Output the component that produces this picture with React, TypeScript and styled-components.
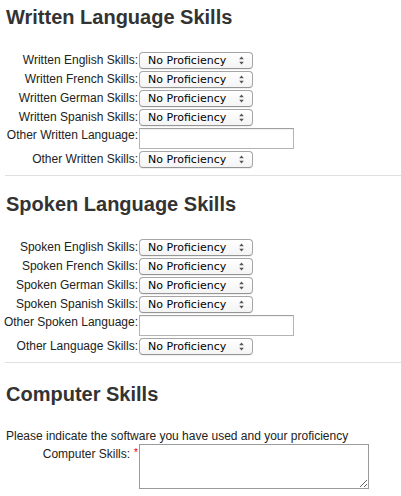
import React from "react";
import styled, { createGlobalStyle } from "styled-components";

const Global = createGlobalStyle`
  html, body { margin: 0; padding: 0; background: #fff; }
  body { font-family: "Liberation Sans", Arial, sans-serif; color: #333; }
  * { box-sizing: border-box; }
`;

const Page = styled.div`
  padding: 6px 0 0 5px;
  width: 401px;
`;

const Section = styled.section<{ $top: number; $divider?: boolean }>`
  padding-top: ${(p) => p.$top}px;
  padding-bottom: ${(p) => (p.$divider ? 7 : 0)}px;
  border-bottom: ${(p) => (p.$divider ? "1px solid #e0e0e0" : "none")};
`;

const Heading = styled.h2`
  margin: 0 0 24px 1px;
  font: 700 20px/22px "Liberation Sans", Arial, sans-serif;
  color: #333;
`;

const Form = styled.div`
  display: grid;
  grid-template-columns: 134px auto;
  row-gap: 2px;
  align-items: start;
  justify-items: start;
`;

const Label = styled.label<{ $lh?: number }>`
  justify-self: end;
  text-align: right;
  white-space: nowrap;
  font: 400 12px/${(p) => p.$lh ?? 17}px "Liberation Sans", Arial, sans-serif;
  color: #222;
  padding-right: 1px;
`;

const SelectWrap = styled.div`
  position: relative;
  width: 114px;
  height: 17px;
`;

const Select = styled.select`
  appearance: none;
  -webkit-appearance: none;
  display: block;
  width: 114px;
  height: 17px;
  margin: 0;
  padding: 0 14px 0 8px;
  border: 1px solid #a6a6a6;
  border-bottom-color: #959595;
  border-radius: 4px;
  background: linear-gradient(#ffffff, #f4f4f4);
  box-shadow: 0 1px 0 rgba(0, 0, 0, 0.06);
  font: 400 11px/15px "DejaVu Sans", "Liberation Sans", sans-serif;
  color: #000;
  outline: none;
`;

const Arrows = styled.svg`
  position: absolute;
  right: 9px;
  top: 4px;
  pointer-events: none;
`;

const TextInput = styled.input`
  display: block;
  width: 155px;
  height: 21px;
  margin: 0;
  padding: 2px 4px;
  border: 1px solid #b4b4b4;
  border-top-color: #a0a0a0;
  box-shadow: inset 0 1px 1px rgba(0, 0, 0, 0.06);
  background: #fff;
  font: 400 12px "Liberation Sans", Arial, sans-serif;
  outline: none;
`;

const Intro = styled.p`
  margin: 0 0 1px 1px;
  font: 400 12px/14px "Liberation Sans", Arial, sans-serif;
  color: #222;
`;

const Required = styled.span`
  color: #d00;
  font-size: 10px;
  vertical-align: 2px;
  margin-left: 4px;
`;

const TextArea = styled.textarea`
  display: block;
  width: 230px;
  height: 45px;
  margin: 0;
  padding: 2px 4px;
  border: 1px solid #9a9a9a;
  background: #fff;
  font: 400 12px "Liberation Sans", Arial, sans-serif;
  outline: none;
`;

const options = [
  "No Proficiency",
  "Basic",
  "Intermediate",
  "Advanced",
  "Fluent",
];

function ProficiencySelect({ id }: { id: string }) {
  return (
    <SelectWrap>
      <Select id={id} defaultValue="No Proficiency">
        {options.map((o) => (
          <option key={o}>{o}</option>
        ))}
      </Select>
      <Arrows width="5" height="9" viewBox="0 0 5 9">
        <path d="M2.5 0.5 L4.8 3.3 L0.2 3.3 Z" fill="#555" />
        <path d="M2.5 8.5 L4.8 5.7 L0.2 5.7 Z" fill="#555" />
      </Arrows>
    </SelectWrap>
  );
}

type Row = { label: string; kind: "select" | "text" };

const written: Row[] = [
  { label: "Written English Skills:", kind: "select" },
  { label: "Written French Skills:", kind: "select" },
  { label: "Written German Skills:", kind: "select" },
  { label: "Written Spanish Skills:", kind: "select" },
  { label: "Other Written Language:", kind: "text" },
  { label: "Other Written Skills:", kind: "select" },
];

const spoken: Row[] = [
  { label: "Spoken English Skills:", kind: "select" },
  { label: "Spoken French Skills:", kind: "select" },
  { label: "Spoken German Skills:", kind: "select" },
  { label: "Spoken Spanish Skills:", kind: "select" },
  { label: "Other Spoken Language:", kind: "text" },
  { label: "Other Language Skills:", kind: "select" },
];

function Rows({ rows, prefix }: { rows: Row[]; prefix: string }) {
  return (
    <Form>
      {rows.map((r, i) => {
        const id = `${prefix}-${i}`;
        return (
          <React.Fragment key={id}>
            <Label htmlFor={id} $lh={r.kind === "text" ? 15 : 17}>
              {r.label}
            </Label>
            {r.kind === "select" ? (
              <ProficiencySelect id={id} />
            ) : (
              <TextInput id={id} type="text" />
            )}
          </React.Fragment>
        );
      })}
    </Form>
  );
}

export default function App() {
  return (
    <>
      <Global />
      <Page>
        <Section $top={0} $divider>
          <Heading>Written Language Skills</Heading>
          <Rows rows={written} prefix="w" />
        </Section>
        <Section $top={17} $divider>
          <Heading>Spoken Language Skills</Heading>
          <Rows rows={spoken} prefix="s" />
        </Section>
        <Section $top={20}>
          <Heading>Computer Skills</Heading>
          <Intro>Please indicate the software you have used and your proficiency</Intro>
          <Form>
            <Label htmlFor="cs">
              Computer Skills:<Required>*</Required>
            </Label>
            <TextArea id="cs" />
          </Form>
        </Section>
      </Page>
    </>
  );
}
